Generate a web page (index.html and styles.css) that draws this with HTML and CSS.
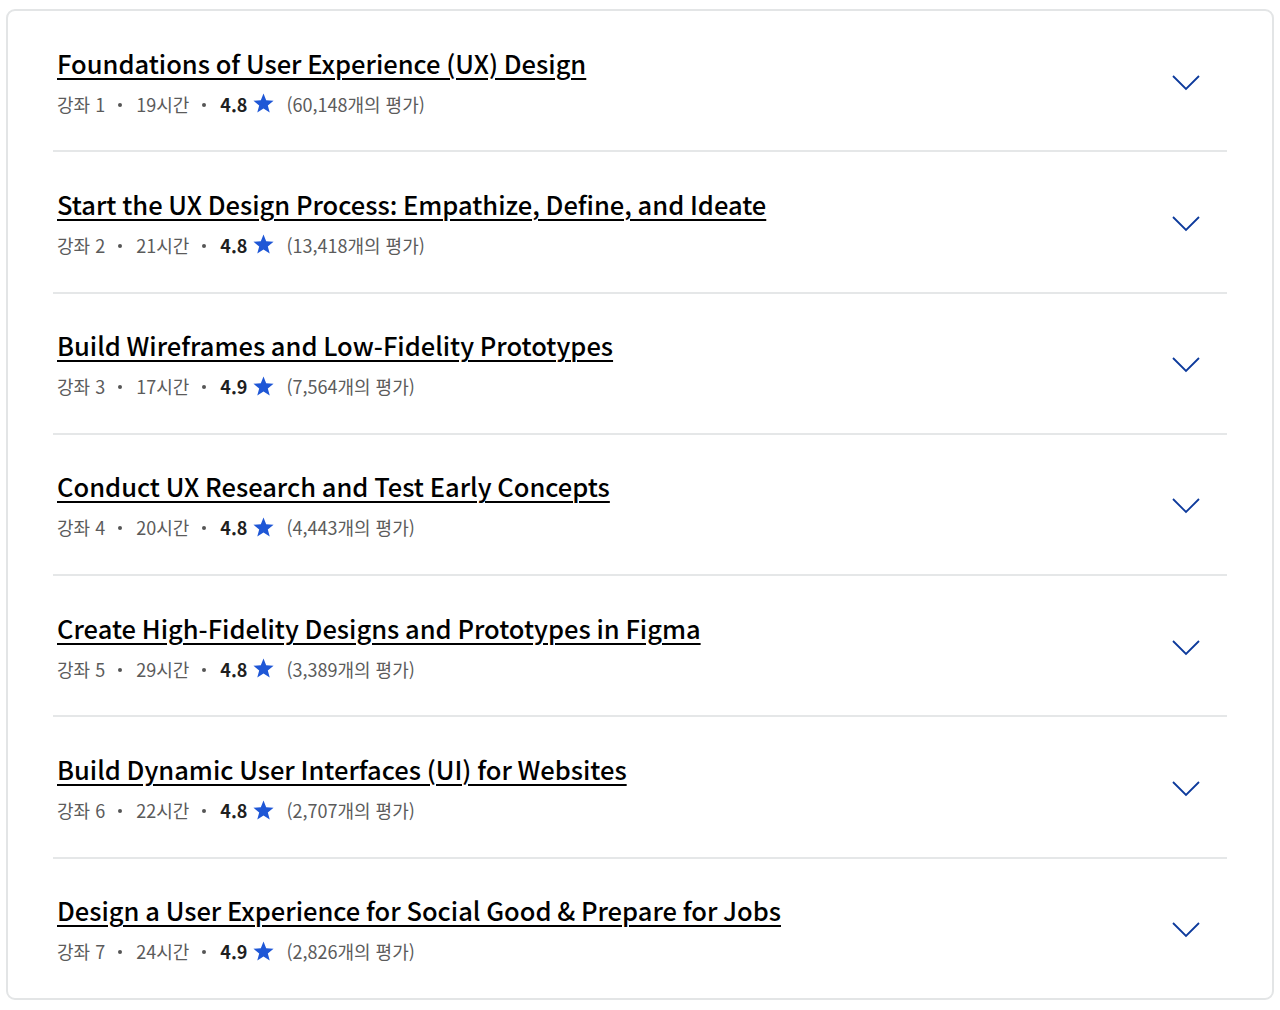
FILE: index.html
```html
<!DOCTYPE html>
<html lang="ko">
<head>
<meta charset="utf-8">
<title>Courses</title>
<link rel="stylesheet" href="styles.css">
</head>
<body>
<div class="card">
  <div class="row">
    <div class="info">
      <a class="title" href="#" lang="en">Foundations of User Experience (UX) Design</a>
      <div class="meta"><span>강좌 1</span><span class="dot"></span><span>19시간</span><span class="dot"></span><b>4.8</b><svg class="star" viewBox="0 0 24 24"><path d="M12 1.5l2.8 7.2 7.7.4-6 4.9 2 7.5L12 17.3l-6.5 4.2 2-7.5-6-4.9 7.7-.4z"/></svg><span>(60,148개의 평가)</span></div>
    </div>
    <svg class="chev" viewBox="0 0 28 16"><path d="M1 1l13 13L27 1"/></svg>
  </div>
  <div class="row">
    <div class="info">
      <a class="title" href="#" lang="en">Start the UX Design Process: Empathize, Define, and Ideate</a>
      <div class="meta"><span>강좌 2</span><span class="dot"></span><span>21시간</span><span class="dot"></span><b>4.8</b><svg class="star" viewBox="0 0 24 24"><path d="M12 1.5l2.8 7.2 7.7.4-6 4.9 2 7.5L12 17.3l-6.5 4.2 2-7.5-6-4.9 7.7-.4z"/></svg><span>(13,418개의 평가)</span></div>
    </div>
    <svg class="chev" viewBox="0 0 28 16"><path d="M1 1l13 13L27 1"/></svg>
  </div>
  <div class="row">
    <div class="info">
      <a class="title" href="#" lang="en">Build Wireframes and Low-Fidelity Prototypes</a>
      <div class="meta"><span>강좌 3</span><span class="dot"></span><span>17시간</span><span class="dot"></span><b>4.9</b><svg class="star" viewBox="0 0 24 24"><path d="M12 1.5l2.8 7.2 7.7.4-6 4.9 2 7.5L12 17.3l-6.5 4.2 2-7.5-6-4.9 7.7-.4z"/></svg><span>(7,564개의 평가)</span></div>
    </div>
    <svg class="chev" viewBox="0 0 28 16"><path d="M1 1l13 13L27 1"/></svg>
  </div>
  <div class="row">
    <div class="info">
      <a class="title" href="#" lang="en">Conduct UX Research and Test Early Concepts</a>
      <div class="meta"><span>강좌 4</span><span class="dot"></span><span>20시간</span><span class="dot"></span><b>4.8</b><svg class="star" viewBox="0 0 24 24"><path d="M12 1.5l2.8 7.2 7.7.4-6 4.9 2 7.5L12 17.3l-6.5 4.2 2-7.5-6-4.9 7.7-.4z"/></svg><span>(4,443개의 평가)</span></div>
    </div>
    <svg class="chev" viewBox="0 0 28 16"><path d="M1 1l13 13L27 1"/></svg>
  </div>
  <div class="row">
    <div class="info">
      <a class="title" href="#" lang="en">Create High-Fidelity Designs and Prototypes in Figma</a>
      <div class="meta"><span>강좌 5</span><span class="dot"></span><span>29시간</span><span class="dot"></span><b>4.8</b><svg class="star" viewBox="0 0 24 24"><path d="M12 1.5l2.8 7.2 7.7.4-6 4.9 2 7.5L12 17.3l-6.5 4.2 2-7.5-6-4.9 7.7-.4z"/></svg><span>(3,389개의 평가)</span></div>
    </div>
    <svg class="chev" viewBox="0 0 28 16"><path d="M1 1l13 13L27 1"/></svg>
  </div>
  <div class="row">
    <div class="info">
      <a class="title" href="#" lang="en">Build Dynamic User Interfaces (UI) for Websites</a>
      <div class="meta"><span>강좌 6</span><span class="dot"></span><span>22시간</span><span class="dot"></span><b>4.8</b><svg class="star" viewBox="0 0 24 24"><path d="M12 1.5l2.8 7.2 7.7.4-6 4.9 2 7.5L12 17.3l-6.5 4.2 2-7.5-6-4.9 7.7-.4z"/></svg><span>(2,707개의 평가)</span></div>
    </div>
    <svg class="chev" viewBox="0 0 28 16"><path d="M1 1l13 13L27 1"/></svg>
  </div>
  <div class="row">
    <div class="info">
      <a class="title" href="#" lang="en">Design a User Experience for Social Good &amp; Prepare for Jobs</a>
      <div class="meta"><span>강좌 7</span><span class="dot"></span><span>24시간</span><span class="dot"></span><b>4.9</b><svg class="star" viewBox="0 0 24 24"><path d="M12 1.5l2.8 7.2 7.7.4-6 4.9 2 7.5L12 17.3l-6.5 4.2 2-7.5-6-4.9 7.7-.4z"/></svg><span>(2,826개의 평가)</span></div>
    </div>
    <svg class="chev" viewBox="0 0 28 16"><path d="M1 1l13 13L27 1"/></svg>
  </div>
</div>
</body>
</html>
```

FILE: styles.css
```css
* { box-sizing: border-box; }
html, body { background: #ffffff; }
body {
  margin: 9px 6px;
  font-family: "Noto Sans CJK KR", "Noto Sans", sans-serif;
  color: #1f1f1f;
}
.card {
  width: 1268px;
  height: 991px;
  border: 2px solid #e3e5e6;
  border-radius: 9px;
  padding: 0 45px;
  display: flex;
  flex-direction: column;
}
.row {
  flex: 1;
  display: flex;
  align-items: center;
  justify-content: space-between;
  padding: 3px 27px 0 4px;
  border-bottom: 2px solid #e5e7e8;
}
.row:last-child { border-bottom: none; }
.info {
  display: flex;
  flex-direction: column;
  align-items: flex-start;
  gap: 11px;
}
.title {
  font-size: 25.5px;
  line-height: 32px;
  font-weight: 500;
  color: #000;
  text-decoration: underline;
  text-decoration-thickness: 2px;
  text-underline-offset: 4px;
}
.meta {
  display: flex;
  align-items: center;
  font-size: 18px;
  line-height: 28px;
  color: #5b5b5b;
}
.dot {
  width: 4px;
  height: 4px;
  border-radius: 50%;
  background: #555;
  margin: 2px 14px 0 13px;
}
.meta b {
  color: #1f1f1f;
  font-weight: 700;
}
.star {
  width: 23px;
  height: 23px;
  margin: 0 11px 0 5px;
  fill: #1f57d6;
}
.chev {
  width: 28px;
  height: 16px;
  fill: none;
  stroke: #0d3a9c;
  stroke-width: 1.8;
  margin-top: 1px;
}
```
